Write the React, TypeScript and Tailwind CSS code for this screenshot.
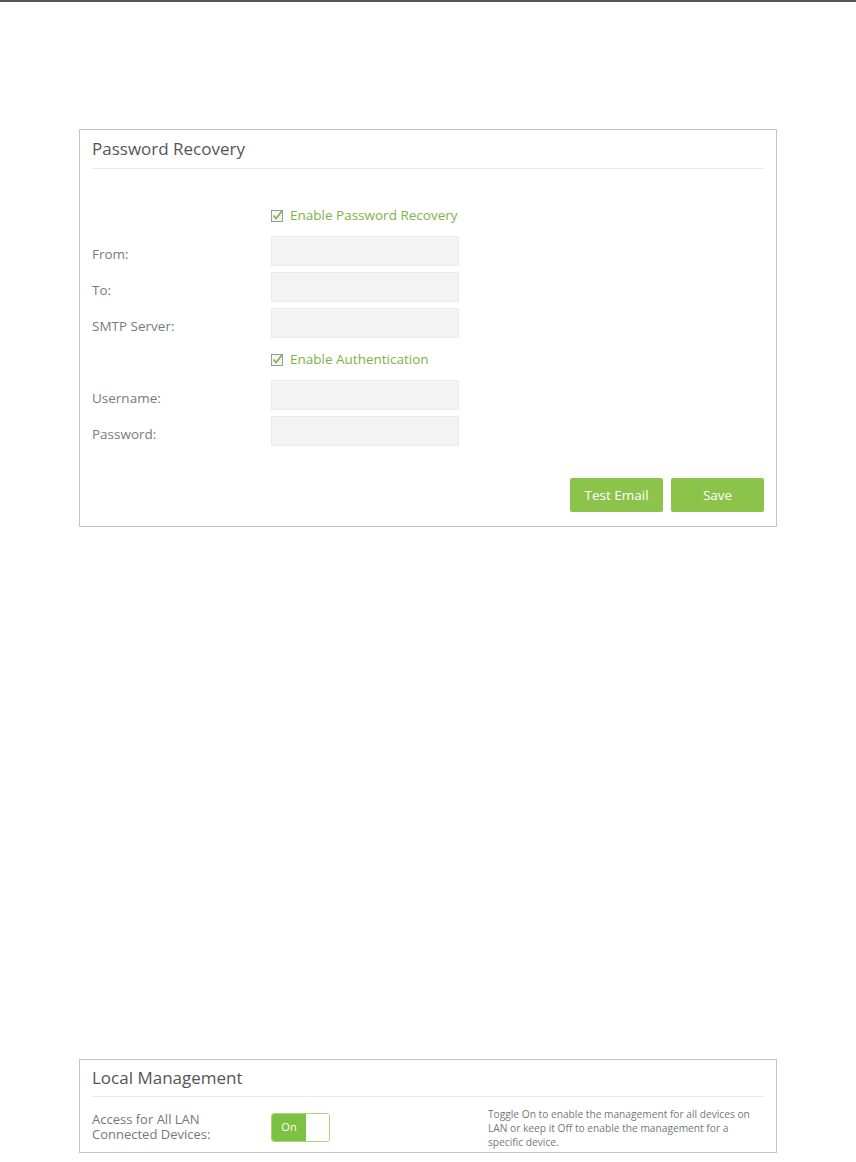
import React from "react";

const font = { fontFamily: '"Open Sans", "Liberation Sans", sans-serif' };

function Check({ label }: { label: string }) {
  return (
    <div className="flex h-[30px] items-center">
      <div className="w-[179px] shrink-0" />
      <div className="flex items-center gap-[6px]">
        <svg width="13" height="13" viewBox="0 0 13 13" className="shrink-0">
          <rect x="0.5" y="1.5" width="11" height="11" fill="#f4f4f4" stroke="#9a9a9a" strokeWidth="1" />
          <path d="M2.5 6.5 L5 9.5 L11 2" fill="none" stroke="#7cb342" strokeWidth="1.6" />
        </svg>
        <span className="text-[13.5px] text-[#7cb342]">{label}</span>
      </div>
    </div>
  );
}

function Field({ label }: { label: string }) {
  return (
    <div className="flex h-[30px] items-center">
      <div className="mt-[6px] w-[179px] shrink-0 text-[13.5px] text-[#7a7a7a]">{label}</div>
      <div className="h-[30px] w-[188px] border border-[#ececec] bg-[#f3f3f3]" />
    </div>
  );
}

export default function App() {
  return (
    <div className="relative h-[1162px] w-[856px] bg-white" style={font}>
      <div className="h-[2px] w-full bg-[#555555]" />
      <div className="pl-[79px] pt-[127px]">
        <div className="w-[698px] border border-[#c4c4c4] bg-white">
          <div className="mx-3 flex h-[38px] items-center text-[17px] text-[#555]">Password Recovery</div>
          <div className="mx-3 h-px bg-[#ebebeb]" />
          <div className="flex flex-col gap-[6px] px-3 pt-[31px]">
            <Check label="Enable Password Recovery" />
            <Field label="From:" />
            <Field label="To:" />
            <Field label="SMTP Server:" />
            <Check label="Enable Authentication" />
            <Field label="Username:" />
            <Field label="Password:" />
          </div>
          <div className="flex justify-end gap-2 px-3 pb-[14px] pt-[32px]">
            <button className="h-[34px] w-[93px] rounded-[2px] bg-[#8cc34b] text-[13.5px] text-white">Test Email</button>
            <button className="h-[34px] w-[93px] rounded-[2px] bg-[#8cc34b] text-[13.5px] text-white">Save</button>
          </div>
        </div>
      </div>
      <div className="pl-[79px] pt-[532px]">
        <div className="w-[698px] border border-[#c4c4c4] bg-white">
          <div className="mx-3 flex h-[36px] items-center text-[17px] text-[#555]">Local Management</div>
          <div className="mx-3 h-px bg-[#ebebeb]" />
          <div className="flex items-start px-3 pb-[3px] pt-[10px]">
            <div className="mt-[5px] w-[179px] shrink-0 text-[13px] leading-[15px] text-[#777]">
              Access for All LAN
              <br />
              Connected Devices:
            </div>
            <div className="w-[217px] shrink-0 pt-[6px]">
              <div className="flex h-[29px] w-[59px] overflow-hidden rounded-[3px] border border-[#a9d57a]">
                <div className="flex w-[34px] items-center justify-center bg-[#7dc142] text-[11px] text-white">On</div>
                <div className="flex-1 bg-white" />
              </div>
            </div>
            <div className="text-[10.2px] leading-[14px] text-[#777]">
              Toggle On to enable the management for all devices on
              <br />
              LAN or keep it Off to enable the management for a
              <br />
              specific device.
            </div>
          </div>
        </div>
      </div>
    </div>
  );
}
